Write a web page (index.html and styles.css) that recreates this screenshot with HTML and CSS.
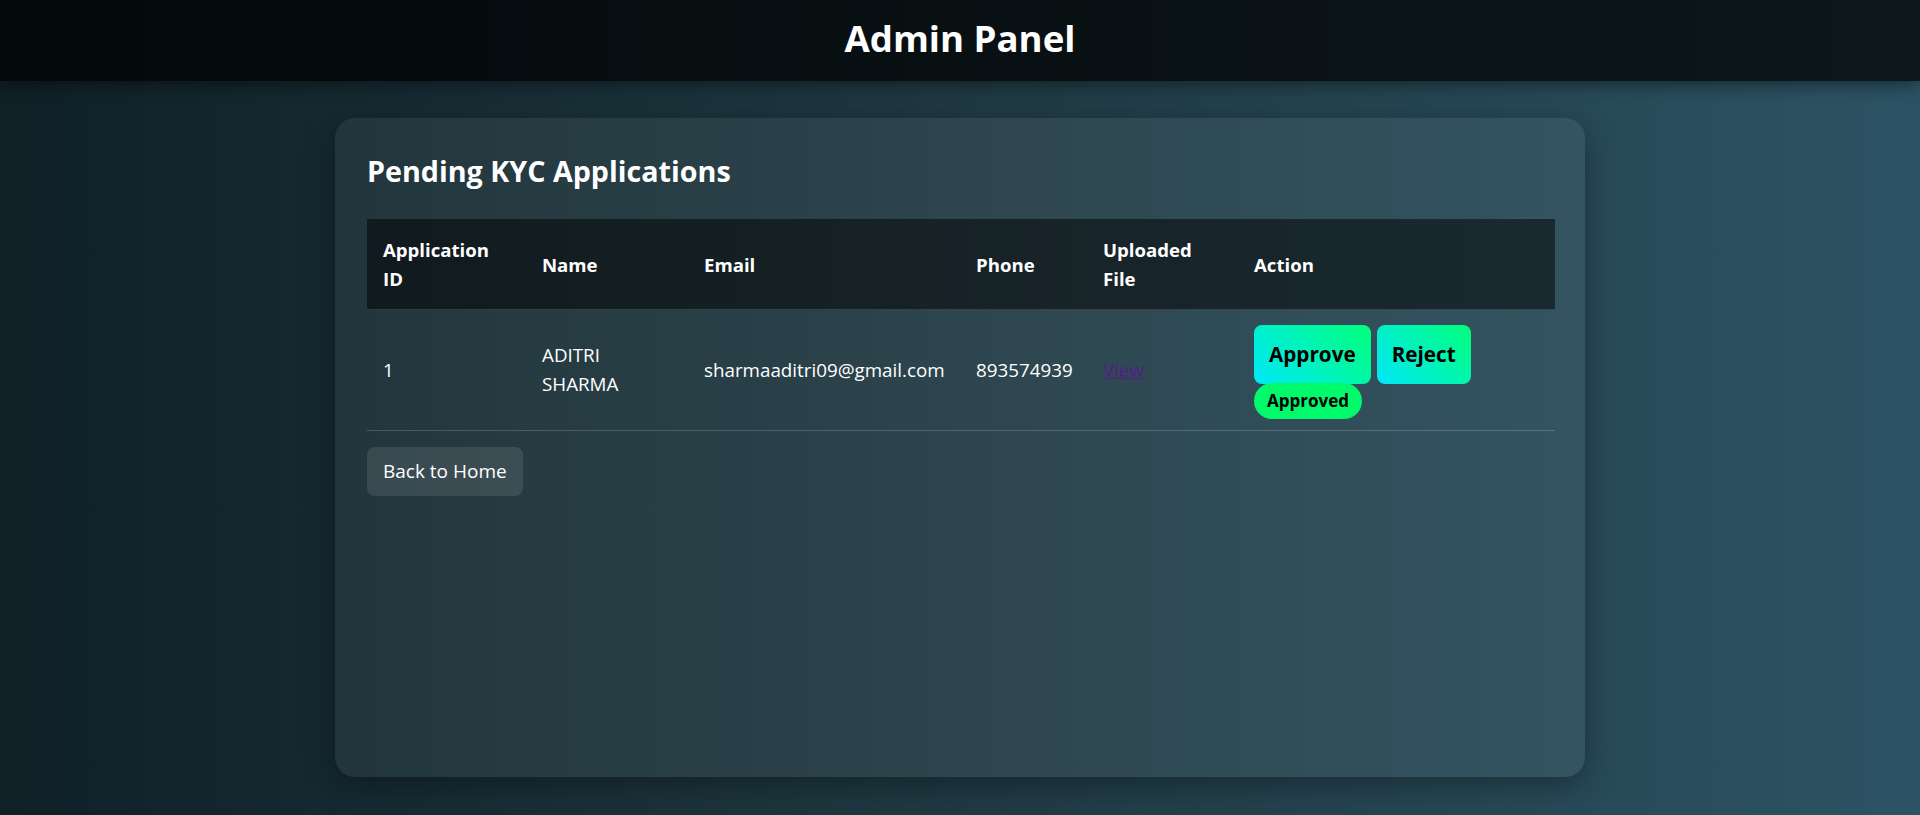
FILE: index.html
```html
<!DOCTYPE html>
<html lang="en">
<head>
<meta charset="utf-8">
<title>Admin Panel</title>
<link rel="stylesheet" href="styles.css">
</head>
<body>
  <header class="topbar">
    <h1 class="topbar-title">Admin Panel</h1>
  </header>
  <main class="main">
    <section class="card">
      <h2 class="card-title">Pending KYC Applications</h2>
      <table class="kyc-table">
        <colgroup>
          <col class="col-id">
          <col class="col-name">
          <col class="col-email">
          <col class="col-phone">
          <col class="col-file">
          <col class="col-action">
        </colgroup>
        <thead>
          <tr>
            <th>Application ID</th>
            <th>Name</th>
            <th>Email</th>
            <th>Phone</th>
            <th>Uploaded File</th>
            <th>Action</th>
          </tr>
        </thead>
        <tbody>
          <tr>
            <td>1</td>
            <td>ADITRI SHARMA</td>
            <td>sharmaaditri09@gmail.com</td>
            <td>893574939</td>
            <td><a class="file-link" href="#">View</a></td>
            <td class="action-cell">
              <div class="action-buttons">
                <button class="btn-grad">Approve</button>
                <button class="btn-grad">Reject</button>
              </div>
              <span class="badge">Approved</span>
            </td>
          </tr>
        </tbody>
      </table>
      <button class="btn-back">Back to Home</button>
    </section>
  </main>
</body>
</html>
```
FILE: styles.css
```css
html, body {
  margin: 0;
  padding: 0;
}

body {
  height: 100vh;
  display: flex;
  flex-direction: column;
  font-family: "Open Sans", "Noto Sans", sans-serif;
  color: #ffffff;
  background: linear-gradient(to right, #0f2027, #203a43, #2c5364);
  overflow: hidden;
}

.topbar {
  height: 81px;
  flex: 0 0 81px;
  display: flex;
  align-items: center;
  justify-content: center;
  background: rgba(0, 0, 0, 0.72);
  box-shadow: 0 4px 16px rgba(0, 0, 0, 0.45);
  position: relative;
  z-index: 1;
}

.topbar-title {
  margin: 0;
  font-size: 36.6px;
  font-weight: 700;
  line-height: 40px;
  margin-top: -6px;
}

.main {
  flex: 1;
  display: flex;
  justify-content: center;
  padding: 37px 0 38px;
  min-height: 0;
}

.card {
  width: 1250px;
  box-sizing: border-box;
  padding: 32px;
  border-radius: 20px;
  background: rgba(255, 255, 255, 0.06);
  box-shadow: 0 8px 32px rgba(0, 0, 0, 0.35);
}

.card-title {
  margin: 1px 0 28px;
  font-size: 28.7px;
  font-weight: 700;
  line-height: 40px;
}

.kyc-table {
  width: 100%;
  border-collapse: collapse;
  table-layout: fixed;
}

.col-id { width: 159px; }
.col-name { width: 162px; }
.col-email { width: 272px; }
.col-phone { width: 127px; }
.col-file { width: 151px; }
.col-action { width: 317px; }

.kyc-table th {
  background: rgba(0, 0, 0, 0.5);
  text-align: left;
  font-size: 18.6px;
  font-weight: 700;
  line-height: 29px;
  padding: 16px;
  border-bottom: 1px solid rgba(255, 255, 255, 0.15);
  vertical-align: middle;
}

.kyc-table td {
  font-size: 18.8px;
  line-height: 29px;
  padding: 16px;
  vertical-align: middle;
  border-bottom: 1px solid rgba(255, 255, 255, 0.18);
}

.kyc-table td.action-cell {
  padding: 15px 16px 11px;
}

.file-link {
  color: #551a8b;
}

.action-buttons {
  display: flex;
  gap: 6px;
}

.btn-grad {
  border: none;
  border-radius: 8px;
  padding: 12px 15px;
  font-family: inherit;
  font-size: 20.7px;
  font-weight: 700;
  line-height: 35px;
  color: #000;
  background: linear-gradient(45deg, #00e8f8, #00ff7a);
  cursor: pointer;
}

.badge {
  display: inline-block;
  margin-top: -1px;
  padding: 4px 13px;
  border-radius: 18px;
  background: #00fa6c;
  color: #000;
  font-size: 17px;
  font-weight: 700;
  line-height: 28px;
}

.btn-back {
  margin-top: 16px;
  border: none;
  border-radius: 8px;
  padding: 10px 16px;
  font-family: inherit;
  font-size: 19px;
  line-height: 29px;
  color: #fff;
  background: rgba(255, 255, 255, 0.1);
  cursor: pointer;
}
```
